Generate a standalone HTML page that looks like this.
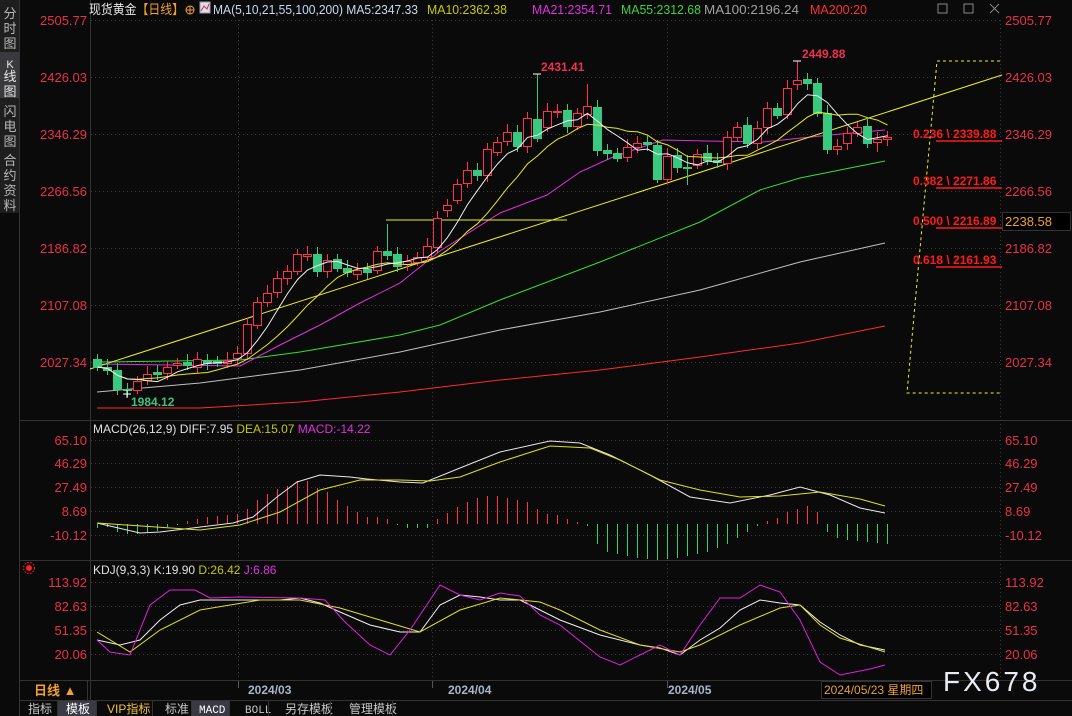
<!DOCTYPE html>
<html><head><meta charset="utf-8">
<style>
html,body{margin:0;padding:0;background:#0a0a0a;width:1072px;height:716px;overflow:hidden}
svg{display:block;font-family:"Liberation Sans","Noto Sans CJK SC",sans-serif}
</style></head><body>
<svg id="s" width="1072" height="716" viewBox="0 0 1072 716" xmlns="http://www.w3.org/2000/svg">
<rect width="1072" height="716" fill="#0a0a0a"/>
<rect x="0" y="0" width="19" height="213" fill="#1e1e1e"/>
<rect x="0" y="52" width="19" height="46" fill="#3a3a3e"/>
<line x1="19.5" y1="0" x2="19.5" y2="716" stroke="#333"/>
<g fill="#b8b8b8" font-size="13" text-anchor="middle">
<text x="10" y="18">分</text><text x="10" y="33">时</text><text x="10" y="48">图</text>
<text x="10" y="68" fill="#e8e8e8" font-size="11">K</text><text x="10" y="81" fill="#e8e8e8">线</text><text x="10" y="96" fill="#e8e8e8">图</text>
<text x="10" y="116">闪</text><text x="10" y="131">电</text><text x="10" y="146">图</text>
<text x="10" y="165">合</text><text x="10" y="180">约</text><text x="10" y="195">资</text><text x="10" y="210">料</text>
</g>
<line x1="90.5" y1="0" x2="90.5" y2="700" stroke="#333"/>
<line x1="20" y1="420.5" x2="1072" y2="420.5" stroke="#333"/>
<line x1="20" y1="560.5" x2="1072" y2="560.5" stroke="#333"/>
<line x1="20" y1="680.5" x2="1072" y2="680.5" stroke="#333"/>
<line x1="20" y1="700.5" x2="1072" y2="700.5" stroke="#333"/>
<line x1="87.5" y1="680" x2="87.5" y2="700" stroke="#333"/>
<g id="grid" stroke="#3a3a3a" stroke-dasharray="1,3"></g>
<g font-size="13">
<text x="89" y="14" fill="#e8e8e8" textLength="95" lengthAdjust="spacingAndGlyphs">现货黄金<tspan fill="#f0a030">【日线】</tspan></text>
<circle cx="190" cy="10" r="4" fill="none" stroke="#f0a030"/><line x1="186" y1="10" x2="194" y2="10" stroke="#f0a030"/><line x1="190" y1="6" x2="190" y2="14" stroke="#f0a030"/>
<rect x="200" y="2" width="10" height="11" fill="#dde" stroke="#99a"/><polyline points="201,11 204,6 207,9 209,4" fill="none" stroke="#c33"/>
<text x="213" y="14" fill="#c8d8f0" textLength="205" lengthAdjust="spacingAndGlyphs">MA(5,10,21,55,100,200) MA5:2347.33</text>
<text x="427" y="14" fill="#c8c800" textLength="80" lengthAdjust="spacingAndGlyphs">MA10:2362.38</text>
<text x="532" y="14" fill="#e030e0" textLength="80" lengthAdjust="spacingAndGlyphs">MA21:2354.71</text>
<text x="621" y="14" fill="#40d040" textLength="80" lengthAdjust="spacingAndGlyphs">MA55:2312.68</text>
<text x="704" y="14" fill="#a0a0a0" textLength="95" lengthAdjust="spacingAndGlyphs">MA100:2196.24</text>
<text x="810" y="14" fill="#ff3030" textLength="57" lengthAdjust="spacingAndGlyphs">MA200:20</text>
</g>
<g stroke="#888" fill="none"><rect x="938" y="4" width="9" height="9"/><rect x="964" y="4" width="9" height="9"/><line x1="990" y1="4" x2="999" y2="13"/><line x1="999" y1="4" x2="990" y2="13"/></g>
<g id="axl" font-size="13" fill="#e8304a"></g>
<g fill="none" stroke-width="1">
<polyline stroke="#c0c0c0" points="97,392 200,383 300,370 400,352 500,330 600,312 700,290 800,262 885,243"/>
<polyline stroke="#ff2a2a" points="97,408 200,408 300,402 400,392 500,380 600,370 700,357 800,343 885,326"/>
<polyline stroke="#30e030" points="97,362 240,360 300,352 400,335 440,325 500,300 600,262 700,222 760,190 800,178 885,161"/>
<polyline stroke="#e030e0" points="97,364 240,366 280,345 320,325 360,303 400,283 440,251 500,213 547,195 580,172 613,157 663,140 707,141 763,142 830,135 885,130"/>
<line x1="90" y1="369" x2="1002" y2="75" stroke="#f0f020"/>
<line x1="386" y1="220" x2="567" y2="220" stroke="#f0f020"/>
<polyline stroke="#f0f020" stroke-dasharray="3,3" points="1000,61 937,61 907,393 1000,393"/>
</g>
<g id="cand" shape-rendering="crispEdges"></g>
<g id="ma"></g>
<g font-size="12" font-weight="bold">
<text x="541" y="71" fill="#f03050">2431.41</text>
<text x="802" y="58" fill="#f03050">2449.88</text>
<text x="131" y="406" fill="#40c080">1984.12</text>
</g>
<g stroke="#fff"><line x1="533" y1="74" x2="541" y2="74"/><line x1="793" y1="61" x2="801" y2="61"/><line x1="123" y1="394" x2="131" y2="394"/><line x1="127" y1="390" x2="127" y2="398"/></g>
<g font-size="12" font-weight="bold" fill="#ff1a1a">
<text x="913" y="138">0.236 \ 2339.88</text>
<text x="913" y="185">0.382 \ 2271.86</text>
<text x="913" y="225">0.500 \ 2216.89</text>
<text x="913" y="264">0.618 \ 2161.93</text>
</g>
<g stroke="#ff1a1a" stroke-width="1.5"><line x1="936" y1="141" x2="1002" y2="141"/><line x1="936" y1="188" x2="1002" y2="188"/><line x1="936" y1="228" x2="1002" y2="228"/><line x1="936" y1="267" x2="1002" y2="267"/></g>
<rect x="1002.5" y="212.5" width="68" height="18" fill="#000" stroke="#333"/>
<text x="1005" y="226" font-size="13" fill="#f0a030">2238.58</text>
<text x="93" y="433" font-size="12" fill="#e0e0e0">MACD(26,12,9) DIFF:7.95 <tspan fill="#c8c800">DEA:15.07</tspan> <tspan fill="#e030e0">MACD:-14.22</tspan></text>
<g id="hist" shape-rendering="crispEdges"></g>
<g fill="none">
<polyline stroke="#e8e8e8" points="97,523 140,533 160,532 233,523 253,517 277,497 297,482 320,475 350,477 367,479 400,482 423,483 460,468 500,452 550,441 580,443 610,455 650,475 690,497 730,503 770,495 800,487 830,495 860,508 885,513"/>
<polyline stroke="#e0e020" points="97,523 200,530 240,525 280,512 320,490 360,480 400,480 430,481 460,477 500,462 550,446 590,448 620,460 660,480 700,490 740,497 780,496 820,492 860,499 885,506"/>
</g>
<circle cx="29" cy="568" r="3" fill="#ff2020"/><circle cx="29" cy="568" r="5.5" fill="none" stroke="#ff2020" stroke-dasharray="1.5,1.5"/>
<text x="93" y="574" font-size="12" fill="#e0e0e0">KDJ(9,3,3) K:19.90 <tspan fill="#c8c800">D:26.42</tspan> <tspan fill="#e030e0">J:6.86</tspan></text>
<g fill="none">
<polyline stroke="#f0f0f0" points="97,640 120,645 140,640 160,620 180,605 200,600 240,600 280,600 300,598 320,603 340,612 370,625 400,632 420,632 440,605 460,595 480,597 500,600 520,600 540,610 560,620 600,635 640,645 660,648 680,655 700,640 720,628 740,610 760,600 780,603 800,605 820,622 840,635 860,645 885,650"/>
<polyline stroke="#e0e020" points="97,632 130,652 160,630 200,610 260,600 300,600 340,608 380,620 420,632 460,610 500,598 540,602 560,610 600,630 640,645 680,652 700,645 740,625 780,608 800,605 820,625 840,638 885,652"/>
<polyline stroke="#e020e0" points="97,640 110,652 130,655 150,605 170,590 195,590 210,598 240,597 300,598 325,600 345,622 370,645 390,655 410,630 430,600 440,585 460,595 480,600 500,593 520,596 540,615 560,625 600,657 620,665 640,655 660,645 680,655 700,625 720,598 740,598 760,585 780,592 800,620 820,662 840,675 870,669 885,665"/>
</g>
<text x="34" y="695" font-size="13" font-weight="bold" fill="#f0a030">日线 ▲</text>
<g stroke="#555"><line x1="238.5" y1="681" x2="238.5" y2="688"/><line x1="432.5" y1="681" x2="432.5" y2="688"/><line x1="667.5" y1="681" x2="667.5" y2="688"/></g>
<g font-size="12" font-weight="bold" fill="#a8b4c8"><text x="248" y="694">2024/03</text><text x="448" y="694">2024/04</text><text x="668" y="694">2024/05</text></g>
<rect x="821.5" y="681.5" width="110" height="17" fill="#000" stroke="#333"/>
<text x="824" y="694" font-size="12" fill="#f0a030">2024/05/23 星期四</text>
<text x="943" y="691" font-size="28" fill="#e8ecf4" letter-spacing="3">FX678</text>
<g font-size="12" fill="#c8c8c8">
<rect x="58" y="701" width="38" height="15" fill="#3a3a44"/><rect x="192" y="701" width="37" height="15" fill="#3a3a44"/>
<text x="28" y="713">指标</text><text x="66" y="713" fill="#fff">模板</text><text x="107" y="713" fill="#f0c040">VIP指标</text><text x="165" y="713">标准</text>
<text x="199" y="713" fill="#fff" font-family="Liberation Mono" font-size="11">MACD</text><text x="245" y="713" font-family="Liberation Mono" font-size="11">BOLL</text>
<text x="285" y="713">另存模板</text><text x="349" y="713">管理模板</text>
</g>
<g stroke="#333"><line x1="57.5" y1="701" x2="57.5" y2="716"/><line x1="96.5" y1="701" x2="96.5" y2="716"/><line x1="152.5" y1="701" x2="152.5" y2="716"/><line x1="191.5" y1="701" x2="191.5" y2="716"/><line x1="229.5" y1="701" x2="229.5" y2="716"/><line x1="268.5" y1="701" x2="268.5" y2="716"/><line x1="330.5" y1="701" x2="330.5" y2="716"/><line x1="392.5" y1="701" x2="392.5" y2="716"/></g>
</svg>
<script>
var NS="http://www.w3.org/2000/svg";
function el(p,t,a){var e=document.createElementNS(NS,t);for(var k in a)e.setAttribute(k,a[k]);p.appendChild(e);return e;}
var g=document.getElementById('grid');
var mainY=[20,77,134,191,248,305,362],mainL=["2505.77","2426.03","2346.29","2266.56","2186.82","2107.08","2027.34"];
var macY=[440,463,487,511,535],macL=["65.10","46.29","27.49","8.69","-10.12"];
var kY=[582,606,630,654],kL=["113.92","82.63","51.35","20.06"];
var ax=document.getElementById('axl');
function lab(ys,ls){ys.forEach(function(y,i){el(g,'line',{x1:91,y1:y+.5,x2:1000,y2:y+.5});
 var t=el(ax,'text',{x:87,y:y+5,'text-anchor':'end'});t.textContent=ls[i];
 var t2=el(ax,'text',{x:1005,y:y+5});t2.textContent=ls[i];});}
lab(mainY,mainL);lab(macY,macL);lab(kY,kL);
[238,432,667].forEach(function(x){el(g,'line',{x1:x+.5,y1:20,x2:x+.5,y2:680});});
el(g,'line',{x1:1000.5,y1:20,x2:1000.5,y2:680});
var C=[[359,367,'g'],[367,370,'g'],[370,389,'g'],[389,390,'g'],[381,390,'r'],[374,380,'r'],[372,374,'g'],[367,373,'r'],[363,365,'r'],[362,365,'g'],
[359,367,'r'],[360,363,'g'],[361,363,'g'],[360,363,'r'],[353,358,'r'],[324,353,'r'],[302,325,'r'],[293,302,'r'],[278,292,'r'],[271,278,'r'],
[254,271,'r'],[254,256,'r'],[254,271,'g'],[260,271,'r'],[259,268,'g'],[268,272,'g'],[270,274,'r'],[269,272,'g'],[251,270,'r'],[251,255,'g',224],
[254,266,'g'],[261,264,'r'],[257,262,'r'],[246,257,'r'],[218,247,'r'],[205,210,'r'],[184,200,'r'],[170,183,'r'],[170,175,'g'],[149,175,'r'],
[142,152,'r'],[132,141,'r'],[132,146,'g'],[118,146,'r'],[119,138,'g',74],[111,127,'r'],[111,112,'r'],[110,126,'g'],[113,126,'r'],[106,114,'r',84],
[107,150,'g'],[150,153,'g'],[153,158,'g'],[147,157,'r'],[143,147,'r'],[142,144,'g'],[145,179,'g'],[156,179,'r'],[155,167,'g'],[167,168,'g',155,185],
[154,165,'r'],[153,160,'g'],[160,162,'g'],[137,163,'r'],[127,137,'r'],[125,143,'g'],[128,143,'r'],[108,127,'r'],[108,115,'g'],[88,114,'r'],
[80,84,'r',61],[79,83,'g'],[83,113,'g'],[113,149,'g'],[146,149,'r'],[133,143,'r'],[127,133,'r'],[126,143,'g'],[139,142,'r',null,152],[137,139,'r']];
var cg=document.getElementById('cand');var closes=[];
C.forEach(function(c,i){var x=97+10*i;var col=c[2]=='r'?'#ff3050':'#38c880';
 var wt=c[3]||c[0]-5-((i*7)%4),wb=c[4]||c[1]+4+((i*5)%4);
 el(cg,'line',{x1:x+.5,y1:wt,x2:x+.5,y2:wb,stroke:col});
 var h=Math.max(1,c[1]-c[0]);
 if(c[2]=='r')el(cg,'rect',{x:x-3.5,y:c[0]+.5,width:8,height:h,fill:'#0a0a0a',stroke:col});
 else el(cg,'rect',{x:x-4,y:c[0],width:9,height:h+1,fill:col});
 closes.push(c[2]=='r'?c[0]:c[1]);});
var mg=document.getElementById('ma');
function ma(n,col){var pts=[];for(var i=0;i<closes.length;i++){var s=0,k=0;for(var j=Math.max(0,i-n+1);j<=i;j++){s+=closes[j];k++;}pts.push((97+10*i+.5)+','+(s/k).toFixed(1));}
 el(mg,'polyline',{points:pts.join(' '),fill:'none',stroke:col});}
ma(10,'#e8e820');ma(5,'#f0f0f0');
var H=[-4,-3,-8,-10,-10,-8,-7,-3,-1,3,5,7,8,9,10,15,24,30,35,38,43,43,36,32,24,18,12,7,7,5,-1,-4,-4,-4,5,11,17,22,26,28,28,26,24,22,15,10,9,5,2,-2,-20,-28,-30,-32,-34,-35,-36,-35,-34,-32,-30,-28,-24,-20,-14,-8,-2,3,6,12,15,18,12,-8,-14,-16,-17,-18,-19,-20];
var hg=document.getElementById('hist');
H.forEach(function(v,i){var x=97+10*i;el(hg,'rect',{x:x,y:v>0?524-v:524,width:1,height:Math.abs(v),fill:v>0?'#ff3050':'#30d070'});});
</script>
</body></html>
